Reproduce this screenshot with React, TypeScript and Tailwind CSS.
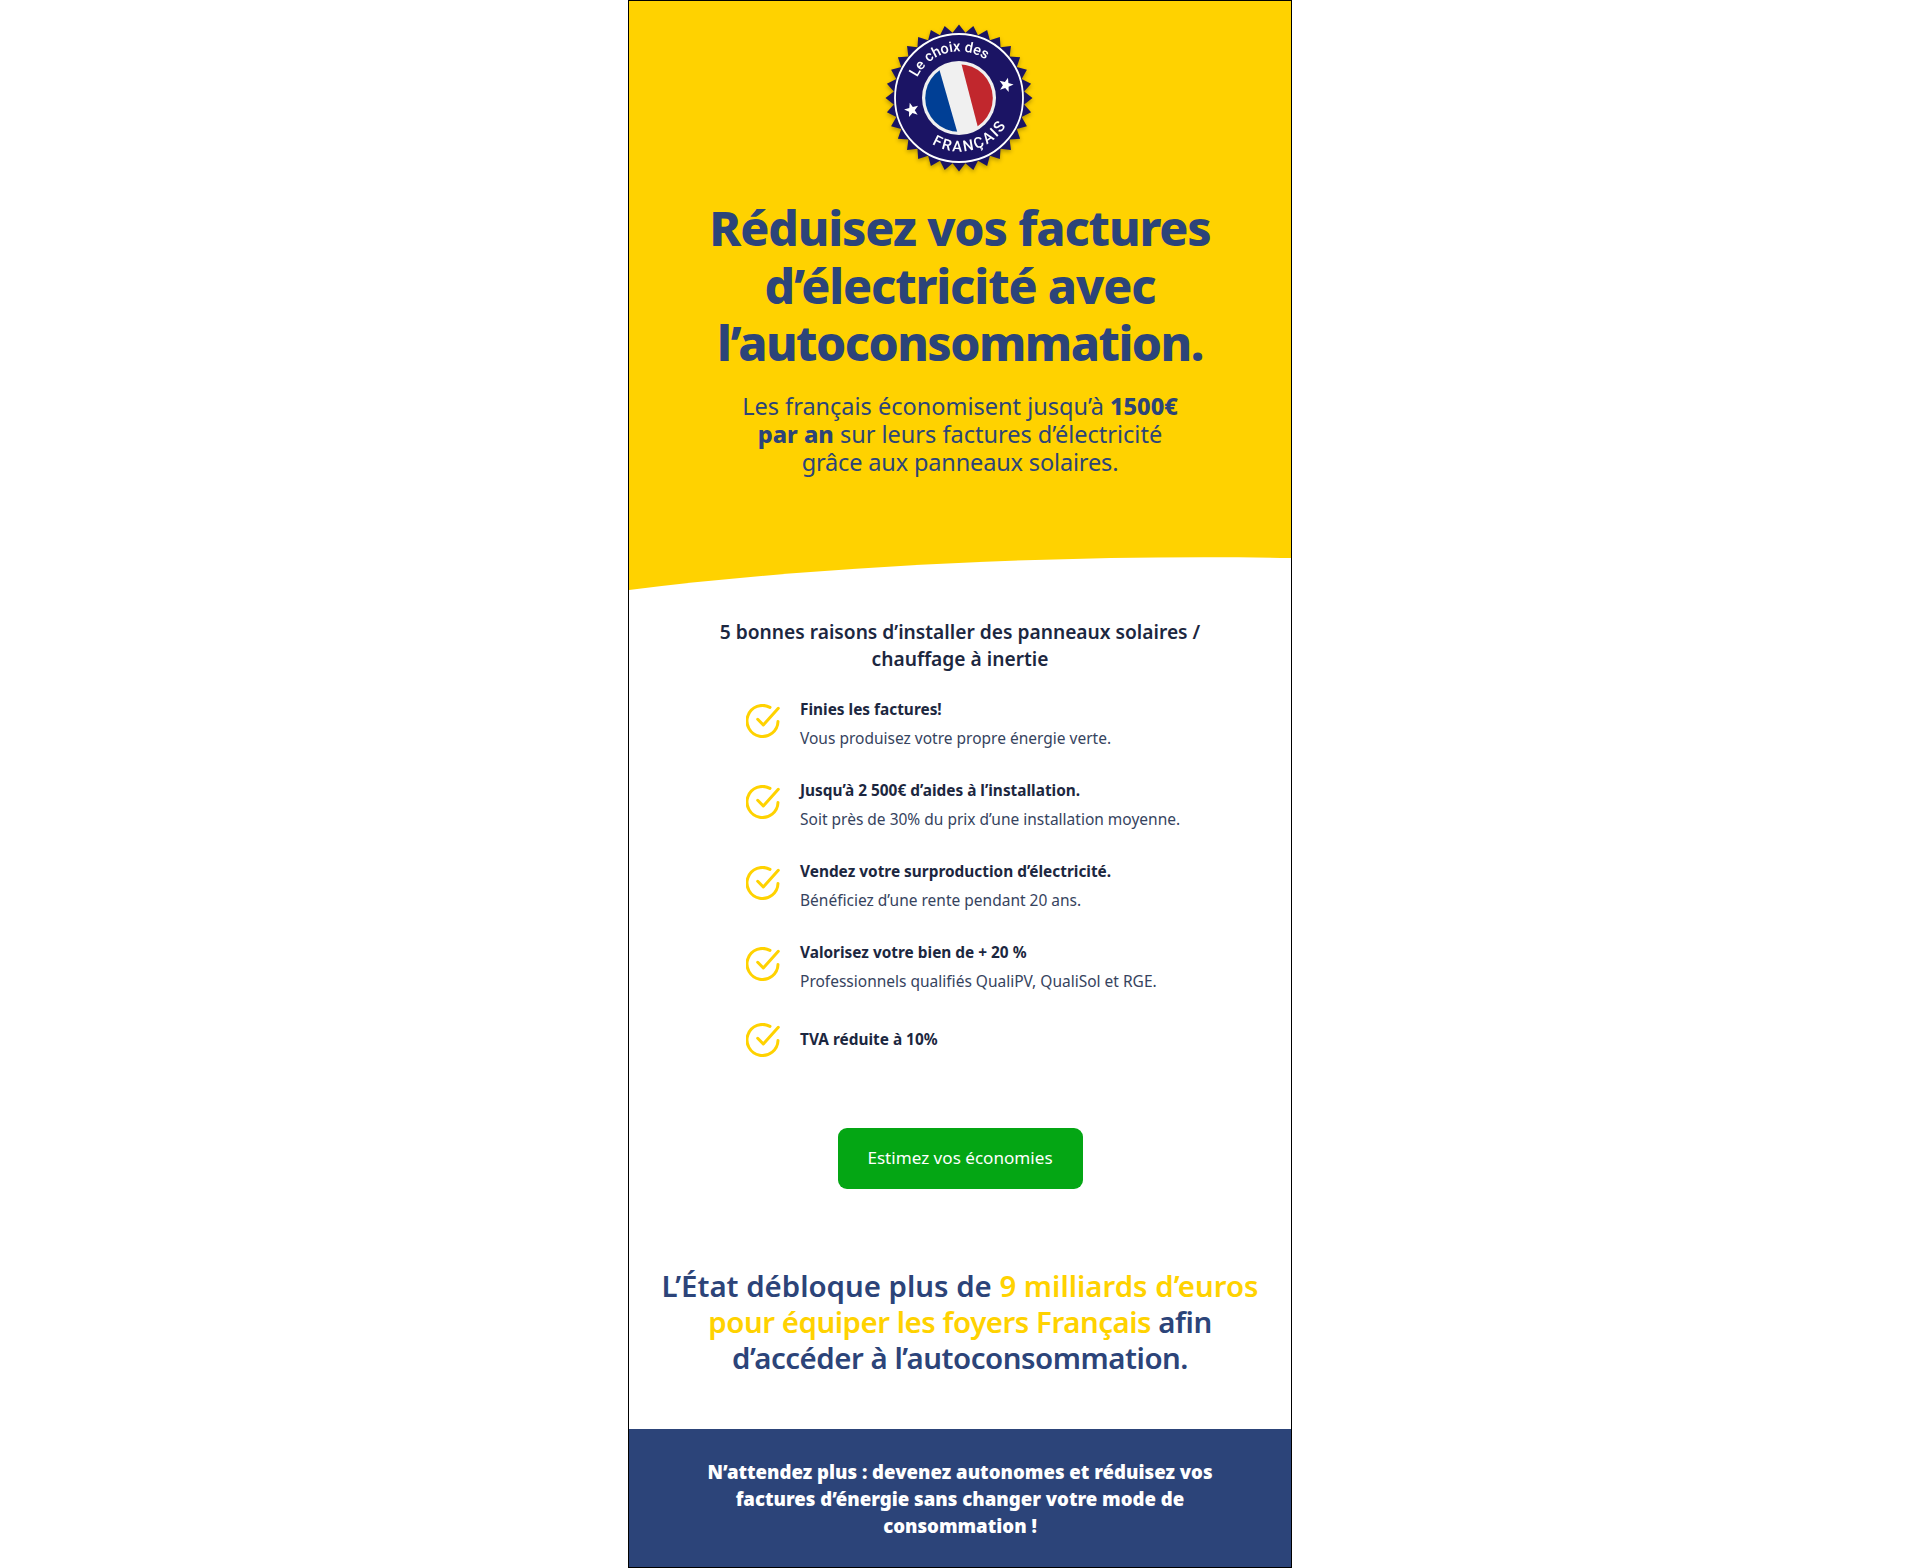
import React from 'react'

const NAVY = '#1b1464'

function starburst() {
  const pts: string[] = []
  const n = 32
  for (let i = 0; i < n * 2; i++) {
    const r = i % 2 === 0 ? 73.5 : 65.5
    const a = (i * Math.PI) / n - Math.PI / 2
    pts.push(`${(74 + r * Math.cos(a)).toFixed(2)},${(75 + r * Math.sin(a)).toFixed(2)}`)
  }
  return pts.join(' ')
}

function star(cx: number, cy: number, rot: number) {
  const pts: string[] = []
  for (let i = 0; i < 10; i++) {
    const r = i % 2 === 0 ? 7.6 : 3.1
    const a = (i * Math.PI) / 5 - Math.PI / 2 + (rot * Math.PI) / 180
    pts.push(`${(cx + r * Math.cos(a)).toFixed(2)},${(cy + r * Math.sin(a)).toFixed(2)}`)
  }
  return pts.join(' ')
}

function Badge() {
  return (
    <svg width="150" height="150" viewBox="0 0 150 150" className="block drop-shadow-[0_2px_2px_rgba(0,0,0,0.3)]">
      <defs>
        <path id="arcTop" d="M32.2 54.6A46.5 46.5 0 0 1 101 37" />
        <path id="arcBottom" d="M47 121A54.5 54.5 0 0 0 122 101" />
        <clipPath id="flagClip">
          <circle cx="74" cy="75" r="33.8" />
        </clipPath>
      </defs>
      <polygon points={starburst()} fill={NAVY} />
      <circle cx="74" cy="75" r="64" fill="none" stroke="#fff" strokeWidth="1.8" />
      <circle cx="74" cy="75" r="37" fill="#f0f0f0" />
      <g clipPath="url(#flagClip)">
        <polygon points="30,30 49.6,30 75.4,120 30,120" fill="#003f95" />
        <polygon points="73.6,30 125,30 125,120 97,120" fill="#c1272d" />
      </g>
      <text fill="#fff" fontSize="14.5" fontFamily="Roboto, sans-serif" fontWeight="500">
        <textPath href="#arcTop" textLength="80">Le choix des</textPath>
      </text>
      <text fill="#fff" fontSize="15" fontFamily="Roboto, sans-serif" fontWeight="500">
        <textPath href="#arcBottom" textLength="84">FRANÇAIS</textPath>
      </text>
      <polygon points={star(26.7, 87, -15)} fill="#fff" />
      <polygon points={star(121, 62, 15)} fill="#fff" />
    </svg>
  )
}

function Check({ className }: { className?: string }) {
  return (
    <svg width="34" height="34" viewBox="0 0 34 34" fill="none" stroke="#ffd200" strokeWidth="3" strokeLinecap="round" strokeLinejoin="round" className={className}>
      <path d="M32 17.5A15.5 15.5 0 1 1 24 3.4" />
      <path d="M11.7 15.3l5.6 5.7L32.3 4.3" />
    </svg>
  )
}

const reasons = [
  { title: 'Finies les factures!', text: 'Vous produisez votre propre énergie verte.' },
  { title: 'Jusqu’à 2 500€ d’aides à l’installation.', text: 'Soit près de 30% du prix d’une installation moyenne.' },
  { title: 'Vendez votre surproduction d’électricité.', text: 'Bénéficiez d’une rente pendant 20 ans.' },
  { title: 'Valorisez votre bien de + 20 %', text: 'Professionnels qualifiés QualiPV, QualiSol et RGE.' },
  { title: 'TVA réduite à 10%' },
]

export default function App() {
  return (
    <div className="bg-white w-full min-h-[1568px] font-['Noto_Sans',sans-serif]">
      <div className="mx-auto w-[664px] h-[1568px] border border-black flex flex-col">
        <div className="bg-[#ffd200] flex flex-col items-center pt-[22px]">
          <Badge />
          <h1 className="mt-[26px] text-[48px] leading-[57.6px] font-extrabold text-[#2c4479] text-center tracking-[-1.1px]">
            Réduisez vos factures<br />d’électricité avec<br />
            <span className="tracking-[-1.5px]">l’autoconsommation.</span>
          </h1>
          <p className="mt-[20px] text-[23.5px] leading-[28px] text-[#2c4479] text-center">
            Les français économisent jusqu’à <b className="font-extrabold">1500€</b>
            <br />
            <b className="font-extrabold">par an</b> sur leurs factures d’électricité
            <br />
            <span className="tracking-[-0.15px]">grâce aux panneaux solaires.</span>
          </p>
          <svg viewBox="0 0 662 34" preserveAspectRatio="none" className="block w-full h-[34px] mt-[81px]">
            <path d="M0 33C200 8 450 -3 662 1V34H0Z" fill="#fff" />
          </svg>
        </div>

        <div className="flex-1 flex flex-col items-center bg-white pt-[27px]">
          <h2 className="w-[520px] text-center text-[19.2px] leading-[27px] font-semibold text-[#1c2740]">
            5 bonnes raisons d’installer des panneaux solaires / chauffage à inertie
          </h2>
          <ul className="self-start ml-[117px] mt-[24px] flex flex-col gap-[24px]">
            {reasons.map((r) => (
              <li key={r.title} className={r.text ? 'flex items-center gap-[20px]' : 'flex items-center gap-[20px] h-[40px]'}>
                <Check className={r.text ? 'shrink-0 mb-[6px]' : 'shrink-0'} />
                <div>
                  <div className="text-[15.4px] leading-[27px] font-bold text-[#1c2740]">{r.title}</div>
                  {r.text && <div className="text-[15.5px] leading-[30px] text-[#36435e]">{r.text}</div>}
                </div>
              </li>
            ))}
          </ul>
          <button className="mt-[68px] w-[245px] h-[61px] rounded-[9px] bg-[#04a614] text-white text-[17.1px]">
            Estimez vos économies
          </button>
          <h2 className="mt-[79px] text-[29.4px] leading-[36px] font-semibold text-[#2c4479] text-center">
            L’État débloque plus de <span className="text-[#ffd200]">9 milliards d’euros</span>
            <br />
            <span className="tracking-[-0.45px]">
              <span className="text-[#ffd200]">pour équiper les foyers Français</span> afin
            </span>
            <br />
            <span className="tracking-[-0.45px]">d’accéder à l’autoconsommation.</span>
          </h2>
        </div>

        <div className="bg-[#2c4479] h-[138px] flex items-center justify-center">
          <p className="text-center text-[18.6px] leading-[27px] font-black text-white">
            N’attendez plus : devenez autonomes et réduisez vos
            <br />
            factures d’énergie sans changer votre mode de
            <br />
            consommation !
          </p>
        </div>
      </div>
    </div>
  )
}
